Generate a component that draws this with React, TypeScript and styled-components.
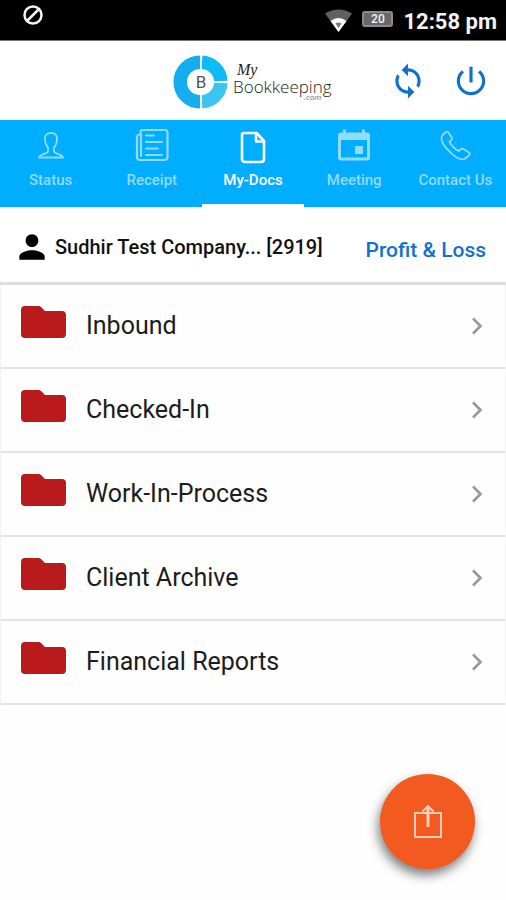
import React from "react";
import styled, { createGlobalStyle } from "styled-components";

const GlobalStyle = createGlobalStyle`
  *, *::before, *::after { box-sizing: border-box; }
  body { margin: 0; background: #fefefe; color: #111; font-family: Roboto, "Noto Sans", sans-serif; }
  button { font: inherit; color: inherit; border: 0; padding: 0; background: none; cursor: pointer; }
  svg { display: block; flex: none; }
`;

const StatusBar = styled.div`
  display: flex;
  align-items: center;
  height: 41px;
  padding: 0 9px 0 22px;
  background: #000;
  border-bottom: 1px solid #777;
  color: #f4f4f4;
`;

const Blocked = styled.div`
  flex: 1;
  padding-bottom: 10px;
`;

const Battery = styled.span`
  width: 31px;
  margin: 0 10px 2px 10px;
  border: 2px solid #8c8c8c;
  border-radius: 3px;
  background: #686868;
  font-size: 12px;
  font-weight: 500;
  line-height: 12px;
  text-align: center;
`;

const Clock = styled.time`
  padding-top: 4px;
  font-size: 22px;
  font-weight: 700;
  line-height: 26px;
`;

const Header = styled.header`
  display: grid;
  grid-template-columns: 1fr auto 1fr;
  align-items: center;
  height: 79px;
  padding: 0 16px;
  background: #fff;
`;

const Actions = styled.div`
  display: flex;
  justify-content: flex-end;
  gap: 25px;
  color: #1270d0;
`;

const Tabs = styled.nav`
  display: grid;
  grid-template-columns: repeat(5, 1fr);
  background: #00adff;
`;

const Tab = styled.button<{ $active?: boolean }>`
  display: flex;
  flex-direction: column;
  align-items: center;
  justify-content: flex-start;
  gap: 6px;
  height: 87px;
  padding-top: 8px;
  border-bottom: 3px solid ${(p) => (p.$active ? "#fff" : "#00adff")};
  color: ${(p) => (p.$active ? "#fff" : "#90dcff")};
`;

const TabLabel = styled.span`
  font-size: 15px;
  font-weight: 500;
  line-height: 20px;
  white-space: nowrap;
`;

const CompanyBar = styled.section`
  display: flex;
  align-items: center;
  height: 78px;
  padding: 4px 20px 0 13px;
  background: #fff;
  border-bottom: 3px solid #dedede;
`;

const CompanyName = styled.h1`
  flex: 1;
  margin: 0 0 0 4px;
  font-size: 20px;
  font-weight: 500;
  line-height: 24px;
  white-space: nowrap;
`;

const ReportLink = styled.a`
  padding-top: 6px;
  color: #1270d0;
  font-size: 21px;
  font-weight: 500;
  line-height: 24px;
  text-decoration: none;
  white-space: nowrap;
`;

const FolderList = styled.ul`
  margin: 0;
  padding: 0;
  list-style: none;
  border: solid #f2f2f2;
  border-width: 0 1px;
`;

const FolderItem = styled.li`
  border-bottom: 2px solid #e4e4e4;
`;

const FolderRow = styled.button`
  display: flex;
  align-items: center;
  width: 100%;
  height: 82px;
  padding: 0 22px 0 20px;
  color: #1c1c1c;
  text-align: left;
`;

const FolderIconBox = styled.span`
  padding-bottom: 8px;
`;

const FolderName = styled.span`
  flex: 1;
  padding-left: 20px;
  font-size: 25px;
  line-height: 32px;
`;

const ShareButton = styled.button`
  position: fixed;
  right: 31px;
  bottom: 31px;
  display: grid;
  place-items: center;
  width: 95px;
  height: 95px;
  border-radius: 50%;
  background: #f25a1f;
  box-shadow: -2px 6px 11px rgba(0, 0, 0, 0.5);
`;

function Logo() {
  return (
    <svg width="160" height="58" viewBox="0 0 160 58" role="img" aria-label="My Bookkeeping.com">
      <path d="M27 10.200A19.800 19.800 0 0 0 27 49.800" fill="none" stroke="#14adef" strokeWidth="13.500" />
      <path d="M29 10.200A19.800 19.800 0 0 1 47.800 29" fill="none" stroke="#0ebcf3" strokeWidth="13.500" />
      <path d="M47.800 31A19.800 19.800 0 0 1 29 49.800" fill="none" stroke="#3cc5f3" strokeWidth="13.500" />
      <text x="28" y="36" textAnchor="middle" fontFamily="Roboto, sans-serif" fontSize="17" fill="#555">B</text>
      <text x="64" y="23" fontFamily="'Liberation Serif', serif" fontStyle="italic" fontSize="16" fill="#222">My</text>
      <text x="60" y="41" fontFamily="'Open Sans', sans-serif" fontSize="17" fontWeight="300" fill="#222">Bookkeeping</text>
      <text x="131" y="48" fontFamily="'Open Sans', sans-serif" fontStyle="italic" fontSize="8" fill="#666">.com</text>
    </svg>
  );
}

const SyncIcon = () => (
  <svg width="38" height="38" viewBox="0 0 24 24" fill="currentColor" aria-hidden="true">
    <path d="M12 4V1L8 5l4 4V6c3.31 0 6 2.69 6 6 0 1.01-.25 1.97-.7 2.8l1.46 1.46C19.54 15.03 20 13.57 20 12c0-4.42-3.58-8-8-8zm0 14c-3.31 0-6-2.69-6-6 0-1.01.25-1.97.7-2.8L5.24 7.74C4.46 8.97 4 10.43 4 12c0 4.42 3.58 8 8 8v3l4-4-4-4v3z" />
  </svg>
);

const PowerIcon = () => (
  <svg width="38" height="38" viewBox="0 0 24 24" fill="currentColor" aria-hidden="true">
    <path d="M13 3h-2v10h2V3zm4.83 2.17l-1.42 1.42C17.99 7.86 19 9.81 19 12c0 3.87-3.13 7-7 7s-7-3.13-7-7c0-2.19 1.01-4.14 2.58-5.42L6.17 5.17C4.23 6.82 3 9.26 3 12c0 4.97 4.03 9 9 9s9-4.03 9-9c0-2.74-1.23-5.18-3.17-6.83z" />
  </svg>
);

const PersonIcon = () => (
  <svg width="38" height="38" viewBox="0 0 24 24" fill="#000" aria-hidden="true">
    <path d="M12 12c2.21 0 4-1.79 4-4s-1.79-4-4-4-4 1.79-4 4 1.79 4 4 4zm0 2c-2.67 0-8 1.34-8 4v2h16v-2c0-2.66-5.33-4-8-4z" />
  </svg>
);

const FolderIcon = () => (
  <svg width="45" height="32" viewBox="0 0 45 32" aria-hidden="true">
    <path d="M4 0H17.500Q19 0 20 1L24 5H41Q45 5 45 9V28Q45 32 41 32H4Q0 32 0 28V4Q0 0 4 0Z" fill="#b91a1c" />
  </svg>
);

const ChevronIcon = () => (
  <svg width="12" height="18" viewBox="0 0 12 18" fill="none" stroke="#999" strokeWidth="2.6" aria-hidden="true">
    <path d="M2 1.500L9.500 9L2 16.500" />
  </svg>
);

const ShareIcon = () => (
  <svg width="28" height="34" viewBox="0 0 28 34" fill="none" stroke="#ffd0b8" strokeWidth="2" aria-hidden="true">
    <path d="M1 8H27V32H1Z" />
    <path d="M14 22V1" strokeWidth="3" />
    <path d="M8.500 6.500L14 1L19.500 6.500" />
  </svg>
);

const stroke = { fill: "none", stroke: "currentColor", strokeLinejoin: "round", strokeLinecap: "round" } as const;

const tabs = [
  {
    label: "Status",
    icon: (
      <path
        {...stroke}
        strokeWidth="1.8"
        d="M17 5C12.500 5 10.800 7.500 11 11.500C11.100 15 12 17.500 14 19.500V23.500C13.500 26 6 26 5 29.500H29C28 26 20.500 26 20 23.500V19.500C22 17.500 22.900 15 23 11.500C23.200 7.500 21.500 5 17 5Z"
      />
    ),
  },
  {
    label: "Receipt",
    icon: (
      <g {...stroke} strokeWidth="2.2">
        <path d="M8 2H30Q32.500 2 32.500 4.500V29Q32.500 32 29.500 32H5Q2 32 2 29V9Q2 6.500 5.500 6.500V4.500Q5.500 2 8 2Z" />
        <path d="M6 6.500V28M11 7.500H19M11 14H27M11 20.500H23M11 27H27" />
      </g>
    ),
  },
  {
    label: "My-Docs",
    active: true,
    icon: (
      <g {...stroke} strokeWidth="2.600">
        <path d="M8 5H20.500L28 13V31Q28 34 25 34H9Q6 34 6 31V7Q6 5 8 5Z" />
        <path d="M20 5V13.500H28" />
      </g>
    ),
  },
  {
    label: "Meeting",
    icon: (
      <g fill="currentColor">
        <path
          fillRule="evenodd"
          d="M6 1.500H9V4.500H25V1.500H28V4.500H30Q33 4.500 33 7.500V29.500Q33 32.500 30 32.500H4Q1 32.500 1 29.500V7.500Q1 4.500 4 4.500H6ZM4 12V29.500H30V12Z"
        />
        <rect x="18" y="18" width="8" height="8" />
      </g>
    ),
  },
  {
    label: "Contact Us",
    icon: (
      <path
        {...stroke}
        strokeWidth="1.800"
        d="M8 4L4.500 7C2 11 5 17 10.500 22.500C16 28.500 22 32.500 26.500 31L31 27.500C32 26.500 32 25.500 31 24.500L25.500 21C24.500 20.500 23.500 20.500 22.500 21.500L20.500 23C18 22 12.500 16.500 11.500 14L13.500 12C14.200 11.200 14 10 13.500 9L10.500 4.500C9.800 3.500 9 3.300 8 4Z"
      />
    ),
  },
];

const folders = ["Inbound", "Checked-In", "Work-In-Process", "Client Archive", "Financial Reports"];

export default function App() {
  return (
    <>
      <GlobalStyle />
      <StatusBar>
        <Blocked>
          <svg width="22" height="22" viewBox="0 0 22 22" fill="none" stroke="#f4f4f4" strokeWidth="2.500" aria-hidden="true">
            <circle cx="11" cy="11" r="8.500" />
            <path d="M5 17L17 5" />
          </svg>
        </Blocked>
        <svg width="27" height="23" viewBox="0 0 27 23" aria-hidden="true">
          <path d="M0 4.500Q13.500 -3.500 27 4.500L13.500 23Z" fill="#606060" />
          <path d="M5.500 12Q13.500 6 21.500 12L13.500 23Z" fill="#fff" />
          <path d="M10.500 14.500Q13.500 12.500 16.500 14.500L13.500 19Z" fill="#777" />
        </svg>
        <Battery>20</Battery>
        <Clock>12:58 pm</Clock>
      </StatusBar>
      <Header>
        <span />
        <Logo />
        <Actions>
          <button type="button" aria-label="Refresh"><SyncIcon /></button>
          <button type="button" aria-label="Log out"><PowerIcon /></button>
        </Actions>
      </Header>
      <Tabs>
        {tabs.map((tab) => (
          <Tab key={tab.label} type="button" $active={tab.active} aria-current={tab.active ? "page" : undefined}>
            <svg width="34" height="36" viewBox="0 0 34 36" aria-hidden="true">{tab.icon}</svg>
            <TabLabel>{tab.label}</TabLabel>
          </Tab>
        ))}
      </Tabs>
      <main>
        <CompanyBar>
          <PersonIcon />
          <CompanyName>Sudhir Test Company... [2919]</CompanyName>
          <ReportLink href="#profit-loss">Profit &amp; Loss</ReportLink>
        </CompanyBar>
        <FolderList>
          {folders.map((name) => (
            <FolderItem key={name}>
              <FolderRow type="button">
                <FolderIconBox><FolderIcon /></FolderIconBox>
                <FolderName>{name}</FolderName>
                <ChevronIcon />
              </FolderRow>
            </FolderItem>
          ))}
        </FolderList>
      </main>
      <ShareButton type="button" aria-label="Share"><ShareIcon /></ShareButton>
    </>
  );
}
